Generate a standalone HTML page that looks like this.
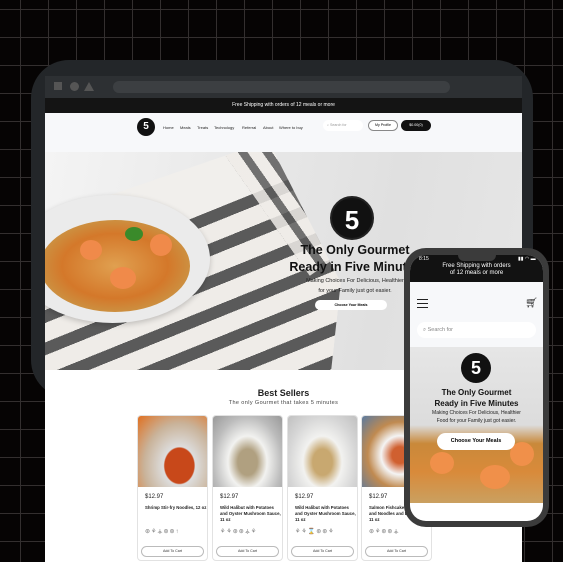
<!DOCTYPE html>
<html><head><meta charset="utf-8"><style>
*{margin:0;padding:0;box-sizing:border-box}
body{width:563px;height:562px;overflow:hidden;position:relative;font-family:"Liberation Sans",sans-serif;
background-color:#060404;
background-image:linear-gradient(#332f2f 1px,transparent 1px),linear-gradient(90deg,#332f2f 1px,transparent 1px);
background-size:28px 28px;background-position:20px 9px}
.abs{position:absolute}
.frame{left:31px;top:60px;width:502px;height:338px;background:#232629;border-radius:38px 38px 16px 38px}
.chrome{left:45px;top:76px;width:477px;height:22px;background:#2d3033}
.screen{left:45px;top:98px;width:477px;height:464px;background:#fff;overflow:hidden}
.ann{left:0;top:0;width:477px;height:15px;background:#141414;color:#fff;font-size:5px;text-align:center;line-height:15px}
.hdr{left:0;top:15px;width:477px;height:39px;background:#f7f8fa}
.nav{font-size:4px;color:#222;top:27px}
.hero{left:0;top:54px;width:477px;height:218px;background:linear-gradient(100deg,#f4f4f4 0%,#e8e8e8 40%,#e0e0e0 70%,#e6e6e6 100%);overflow:hidden}
.logo{border-radius:50%;background:#111;color:#fff;font-weight:bold;text-align:center}
.card{top:317px;width:71px;height:146px;border:1px solid #e2e2e2;border-radius:4px;background:#fff;overflow:hidden}
.card .img{height:71px}
.price{position:absolute;left:7px;top:78px;font-size:6px;color:#222}
.nm{position:absolute;left:7px;top:89px;font-size:4.3px;line-height:5.8px;color:#222;font-weight:bold;width:62px}
.ic{position:absolute;left:7px;top:112px;font-size:6px;color:#777;letter-spacing:1px}
.btn{position:absolute;left:3px;top:130px;width:63px;height:11px;border:1px solid #bbb;border-radius:6px;font-size:3.6px;text-align:center;line-height:9px;color:#333}
.phone{left:404px;top:248px;width:145px;height:279px;background:#3b3b3b;border-radius:22px}
.pscreen{left:410px;top:255px;width:133px;height:266px;background:#fff;border-radius:16px;overflow:hidden}
</style></head><body>
<div class="abs frame"></div>
<div class="abs chrome">
 <div class="abs" style="left:9px;top:6px;width:8px;height:8px;background:#555"></div>
 <div class="abs" style="left:25px;top:6px;width:9px;height:9px;border-radius:50%;background:#555"></div>
 <div class="abs" style="left:39px;top:6px;width:0;height:0;border-left:5px solid transparent;border-right:5px solid transparent;border-bottom:9px solid #555"></div>
 <div class="abs" style="left:68px;top:5px;width:337px;height:12px;border-radius:6px;background:#3c3f42"></div>
</div>
<div class="abs screen">
 <div class="abs ann">Free Shipping with orders of 12 meals or more</div>
 <div class="abs hdr"></div>
 <div class="abs logo" style="left:92px;top:20px;width:18px;height:18px;font-size:10px;line-height:18px">5</div>
 <div class="abs nav" style="left:118px">Home</div>
 <div class="abs nav" style="left:135px">Meals</div>
 <div class="abs nav" style="left:152px">Treats</div>
 <div class="abs nav" style="left:169px">Technology</div>
 <div class="abs nav" style="left:197px">Referral</div>
 <div class="abs nav" style="left:218px">About</div>
 <div class="abs nav" style="left:234px">Where to buy</div>
 <div class="abs" style="left:278px;top:22px;width:40px;height:11px;background:#fff;border-radius:6px;font-size:3.6px;color:#999;line-height:11px;padding-left:4px">⌕ Search for</div>
 <div class="abs" style="left:323px;top:22px;width:30px;height:11px;border:1px solid #888;border-radius:6px;font-size:3.6px;line-height:9px;text-align:center;background:#fff">My Profile</div>
 <div class="abs" style="left:356px;top:22px;width:30px;height:11px;background:#111;border-radius:6px;font-size:3.6px;line-height:11px;text-align:center;color:#fff">$0.00(0)</div>
 <div class="abs hero">
  <div class="abs" style="left:0;top:0;width:477px;height:218px;clip-path:polygon(0 30%,40% 0,48% 0,62% 60%,60% 100%,0 100%)">
   <div class="abs" style="left:0;top:0;width:477px;height:218px;background:#f1efec"></div>
   <div class="abs" style="left:-60px;top:150px;width:420px;height:240px;transform:rotate(-22deg);transform-origin:0 0;background:repeating-linear-gradient(0deg,#efece8 0 18px,#5a5a5a 18px 30px)"></div>
   <div class="abs" style="left:150px;top:-40px;width:60px;height:200px;transform:rotate(-35deg);transform-origin:0 0;background:repeating-linear-gradient(90deg,#efece8 0 12px,#5a5a5a 12px 20px);opacity:.85"></div>
  </div>
  <div class="abs" style="left:-30px;top:43px;width:195px;height:128px;border-radius:50%;background:#ebebeb;box-shadow:0 2px 6px rgba(0,0,0,.2)"></div>
  <div class="abs" style="left:-5px;top:68px;width:150px;height:92px;border-radius:50%;background:radial-gradient(#e0a050,#d4782a 50%,#c99a4a 80%,#d8c8a0 100%)"></div>
  <div class="abs" style="left:35px;top:88px;width:22px;height:20px;border-radius:50%;background:#f08a4a"></div>
  <div class="abs" style="left:105px;top:82px;width:22px;height:22px;border-radius:50%;background:#f08a4a"></div>
  <div class="abs" style="left:65px;top:115px;width:26px;height:22px;border-radius:50%;background:#f08a4a"></div>
  <div class="abs" style="left:80px;top:75px;width:18px;height:14px;border-radius:50%;background:#3a8a2a"></div>
  <div class="abs logo" style="left:285px;top:44px;width:44px;height:44px;font-size:26px;line-height:44px;border:2px solid #222">5</div>
  <div class="abs" style="left:230px;top:90px;width:160px;text-align:center;font-weight:bold;font-size:12.5px;line-height:17px;color:#111;white-space:nowrap">The Only Gourmet<br>Ready in Five Minutes</div>
  <div class="abs" style="left:230px;top:124px;width:160px;text-align:center;font-size:5.5px;line-height:10px;color:#222">Making Choices For Delicious, Healthier<br>for your Family just got easier.</div>
  <div class="abs" style="left:270px;top:148px;width:72px;height:10px;background:#fff;border-radius:5px;font-size:3.6px;line-height:10px;text-align:center;font-weight:bold">Choose Your Meals</div>
 </div>
 <div class="abs" style="left:0;top:290px;width:477px;text-align:center;font-size:9px;font-weight:bold;color:#222">Best Sellers</div>
 <div class="abs" style="left:0;top:302px;width:477px;text-align:center;font-size:5.5px;color:#444;letter-spacing:.4px">The only Gourmet that takes 5 minutes</div>
 <div class="abs card" style="left:92px"><div class="img" style="background:radial-gradient(ellipse at 60% 70%,#c8481a 25%,#ddd 27%,#c9b39a 60%,#e07020 100%)"></div><div class="price">$12.97</div><div class="nm">Shrimp Stir-fry Noodles, 12 oz</div><div class="ic">⊛⚘⚶⊛⊛↑</div><div class="btn">Add To Cart</div></div>
 <div class="abs card" style="left:167px"><div class="img" style="background:radial-gradient(ellipse at 50% 65%,#b0a080 20%,#f2f2f0 40%,#bcbcbc 70%,#999 100%)"></div><div class="price">$12.97</div><div class="nm">Wild Halibut with Potatoes and Oyster Mushroom Sauce, 11 oz</div><div class="ic">⚘⚘⊛⊛⚶⚘</div><div class="btn">Add To Cart</div></div>
 <div class="abs card" style="left:242px"><div class="img" style="background:radial-gradient(ellipse at 50% 65%,#c8a870 20%,#f2f2f0 40%,#d6d6d6 70%,#c0c0c0 100%)"></div><div class="price">$12.97</div><div class="nm">Wild Halibut with Potatoes and Oyster Mushroom Sauce, 11 oz</div><div class="ic">⚘⚘⌛⊛⊛⚘</div><div class="btn">Add To Cart</div></div>
 <div class="abs card" style="left:316px"><div class="img" style="background:radial-gradient(ellipse at 55% 55%,#d06030 15%,#f4f4f4 35%,#c08a50 60%,#5a7aa0 100%)"></div><div class="price">$12.97</div><div class="nm">Salmon Fishcakes, Zucchini and Noodles and Basil Sauce, 11 oz</div><div class="ic">⊛⚘⊛⊛⚶</div><div class="btn">Add To Cart</div></div>
</div>
<div class="abs phone"></div>
<div class="abs pscreen">
 <div class="abs" style="left:0;top:0;width:133px;height:27px;background:#121212;color:#fff">
  <div class="abs" style="left:9px;top:1px;font-size:5px">8:15</div>
  <div class="abs" style="left:48px;top:0;width:38px;height:6px;background:#3b3b3b;border-radius:0 0 6px 6px"></div>
  <div class="abs" style="left:108px;top:1px;font-size:5px">▮▮ ◠ ▬</div>
  <div class="abs" style="left:0;top:8px;width:133px;text-align:center;font-size:6px;line-height:7px">Free Shipping with orders<br>of 12 meals or more</div>
 </div>
 <div class="abs" style="left:0;top:27px;width:133px;height:65px;background:#f7f8fa">
  <div class="abs" style="left:7px;top:17px;width:11px;height:9px;border-top:1.3px solid #222;border-bottom:1.3px solid #222"><div style="margin-top:2.6px;height:1.3px;background:#222"></div></div>
  <div class="abs" style="left:115px;top:16px;font-size:10px;color:#222">🛒︎</div>
  <div class="abs" style="left:7px;top:40px;width:119px;height:16px;background:#fff;border-radius:8px;font-size:5.5px;color:#888;line-height:16px;padding-left:6px">⌕ Search for</div>
 </div>
 <div class="abs" style="left:0;top:92px;width:133px;height:156px;background:linear-gradient(#e6e6e6 0%,#dcdcdc 50%,#c9893a 62%,#d98a3a 80%,#caa060 100%);overflow:hidden">
  <div class="abs" style="left:20px;top:105px;width:24px;height:22px;border-radius:50%;background:#f0904a"></div>
  <div class="abs" style="left:70px;top:118px;width:30px;height:24px;border-radius:50%;background:#f0904a"></div>
  <div class="abs" style="left:100px;top:95px;width:24px;height:24px;border-radius:50%;background:#f0904a"></div>
  <div class="abs logo" style="left:51px;top:6px;width:30px;height:30px;font-size:18px;line-height:30px">5</div>
  <div class="abs" style="left:0;top:40px;width:133px;text-align:center;font-weight:bold;font-size:8px;line-height:11px;color:#111">The Only Gourmet<br>Ready in Five Minutes</div>
  <div class="abs" style="left:0;top:63px;width:133px;text-align:center;font-size:5px;line-height:7.5px;color:#222">Making Choices For Delicious, Healthier<br>Food for your Family just got easier.</div>
  <div class="abs" style="left:27px;top:86px;width:78px;height:17px;background:#fff;border-radius:9px;font-size:5.5px;font-weight:bold;line-height:17px;text-align:center">Choose Your Meals</div>
 </div>
</div>
</body></html>
